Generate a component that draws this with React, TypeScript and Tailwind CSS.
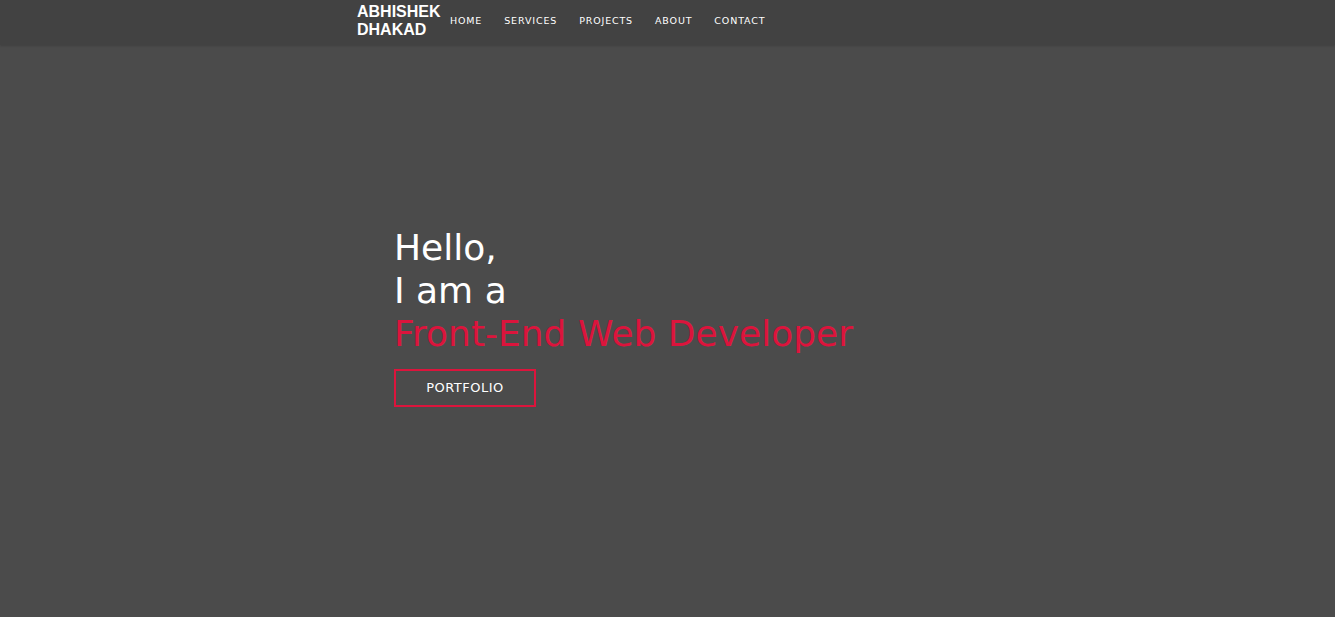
import React from "react";

const links = ["HOME", "SERVICES", "PROJECTS", "ABOUT", "CONTACT"];

const App = () => {
  return (
    <div className="min-h-[617px] h-[617px] flex flex-col bg-[#4b4b4b] font-['DejaVu_Sans',sans-serif]">
      <nav className="h-[45px] bg-[#424242] shadow-[0_1px_2px_rgba(0,0,0,0.15)] flex items-center pl-[357px] pb-[4px]">
        <div className="text-white font-['Liberation_Sans',sans-serif] font-bold text-[16px] leading-[18px] w-[93px]">
          ABHISHEK
          <br />
          DHAKAD
        </div>
        <ul className="flex gap-[22px] mt-[2px]">
          {links.map((item, index) => (
            <li
              key={index}
              className="text-white text-[9.5px] tracking-[0.85px] cursor-pointer"
            >
              {item}
            </li>
          ))}
        </ul>
      </nav>
      <section className="flex-1 pl-[394px] pt-[181px]">
        <h1 className="text-[36px] leading-[43px] font-normal text-white">
          Hello,
          <br />
          I am a
          <br />
          <span className="text-[#dc143c]">Front-End Web Developer</span>
        </h1>
        <button className="mt-[14px] w-[142px] h-[38px] border-2 border-[#dc143c] text-white text-[13px] tracking-[0.5px]">
          PORTFOLIO
        </button>
      </section>
    </div>
  );
};

export default App;
